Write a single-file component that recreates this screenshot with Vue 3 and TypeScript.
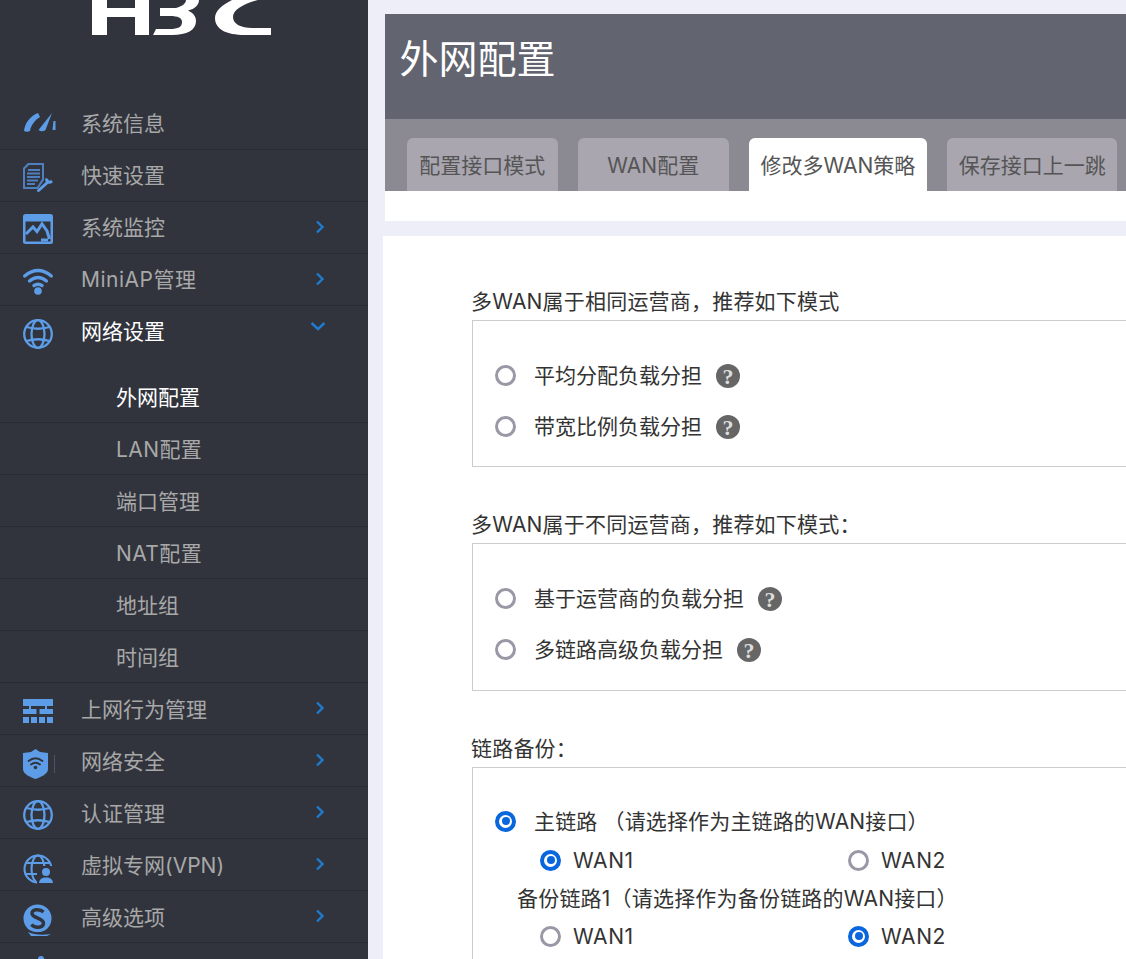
<script setup lang="ts">
interface MenuItem { label: string; icon: string; arrow?: 'right' | 'down'; active?: boolean; wide?: boolean }
const topItems: MenuItem[] = [
  { label: '系统信息', icon: 'gauge' },
  { label: '快速设置', icon: 'doc' },
  { label: '系统监控', icon: 'monitor', arrow: 'right' },
  { label: 'MiniAP管理', icon: 'wifi', arrow: 'right', wide: true },
  { label: '网络设置', icon: 'globe', arrow: 'down', active: true },
]
const subItems = [
  { label: '外网配置', active: true },
  { label: 'LAN配置', wide: true },
  { label: '端口管理' },
  { label: 'NAT配置', wide: true },
  { label: '地址组' },
  { label: '时间组' },
]
const bottomItems: MenuItem[] = [
  { label: '上网行为管理', icon: 'org', arrow: 'right' },
  { label: '网络安全', icon: 'shield', arrow: 'right' },
  { label: '认证管理', icon: 'globe', arrow: 'right' },
  { label: '虚拟专网(VPN)', icon: 'vpn', arrow: 'right' },
  { label: '高级选项', icon: 'quick', arrow: 'right' },
  { label: '', icon: 'tools' },
]
const tabs = [
  { label: '配置接口模式' },
  { label: 'WAN配置' },
  { label: '修改多WAN策略', active: true },
  { label: '保存接口上一跳' },
]
const groups = [
  { title: '多WAN属于相同运营商，推荐如下模式', options: ['平均分配负载分担', '带宽比例负载分担'] },
  { title: '多WAN属于不同运营商，推荐如下模式：', options: ['基于运营商的负载分担', '多链路高级负载分担'] },
]
</script>

<template>
  <div class="page">
    <aside class="sidebar">
      <div class="logo">
        <svg class="logo-svg" width="368" height="40" viewBox="0 0 368 40">
          <path fill="#fff" d="M92 0H107V8H135V0H149V35H135V17H107V35H92Z" />
          <path fill="#fff" d="M160 8H176C183 6 186 3 186 0H199C199 5 195 9 188 10.500C193 13 196 16 196 21C196 30 187 35 172 35H153L156 29H170C178 29 182 27 182 22C182 18 178 16 170 16H160Z" />
          <path fill="#fff" d="M232 0C222 5 215 11 215 18C215 29 226 35 245 35H271V28H252C241 28 233 24 233 17C233 10 243 4 258 0Z" />
        </svg>
      </div>
      <ul class="menu">
        <template v-for="(list, listIndex) in [topItems, bottomItems]" :key="listIndex">
          <li v-for="item in list" :key="item.icon + item.label" class="menu-row" :class="{ on: item.active, low: listIndex === 1, wide: item.wide }">
            <svg class="ic" width="30" height="30" viewBox="0 0 30 30">
              <g v-if="item.icon === 'gauge'" fill="#5d9de8">
                <path d="M1 21C2 13 7 6 15 3L17 7C12 10 8 15 7 21Q4 22.500 1 21Z" />
                <path d="M15.500 20L29 3L22.500 20Q19 22.500 15.500 20Z" />
                <path d="M30.500 11L32.500 11V20L29.500 20Z" />
              </g>
              <g v-else-if="item.icon === 'doc'">
                <path fill="#4f7fbe" d="M5 1H21V18L15 27H0V6Z" />
                <path fill="#31343d" d="M6 3H19V17L14 25H2V7Z" />
                <path fill="#4f7fbe" d="M5 7H17V9H5ZM4 10.500H17V12.500H4ZM4 14H17V16H4ZM4 17.500H15V19.500H4ZM4 21H12V23H4Z" />
                <path fill="none" stroke="#5d9de8" stroke-width="3" stroke-linecap="round" d="M15.500 28.500L25 20" />
                <path fill="none" stroke="#5d9de8" stroke-width="3" d="M24 16.500C23 19 25.500 22 29 19" />
              </g>
              <g v-else-if="item.icon === 'monitor'">
                <rect width="30" height="30" rx="2.500" fill="#5d9de8" />
                <rect x="2.500" y="7.500" width="25" height="20" fill="#31343d" />
                <path fill="none" stroke="#5d9de8" stroke-width="3" d="M3 20L10 13L14 17.500L19 10L24 17L26.500 25" />
                <rect x="18" y="24.500" width="7" height="3" fill="#5d9de8" />
              </g>
              <g v-else-if="item.icon === 'wifi'">
                <g fill="none" stroke="#5d9de8" stroke-width="3.400" stroke-linecap="round">
                  <path d="M1.700 10Q15 -1 28.300 10" />
                  <path d="M6.500 15Q15 8 23.500 15" />
                  <path d="M11 19.500Q15 17 19 19.500" />
                </g>
                <circle cx="15" cy="25" r="3.800" fill="#5d9de8" />
              </g>
              <g v-else-if="item.icon === 'globe'" fill="none" stroke="#5d9de8" stroke-width="2.300">
                <circle cx="15" cy="16" r="13.800" />
                <ellipse cx="15" cy="16" rx="6.500" ry="13.800" />
                <path d="M3.500 9Q15 12.500 26.500 9M3.500 23Q15 19.500 26.500 23" />
              </g>
              <g v-else-if="item.icon === 'org'" fill="#5d9de8">
                <path d="M0 4H30V11H0Z" />
                <path d="M6 11H8V14H6ZM22 11H24V14H22Z" />
                <path d="M0 14H13.500V19H0ZM16.500 14H30V19H16.500Z" />
                <path d="M0 22H6V28H0ZM8 22H14V28H8ZM16 22H22V28H16ZM24 22H30V28H24Z" />
              </g>
              <g v-else-if="item.icon === 'shield'">
                <path fill="#5d9de8" d="M12.500 2L17 5L25 6V22C25 27 18 30 12.500 32C7 30 0 27 0 22V6L8 5Z" />
                <g fill="none" stroke="#31343d" stroke-width="1.800" stroke-linecap="round">
                  <path d="M5.500 14Q12.500 8.500 19.500 14" />
                  <path d="M8 17.500Q12.500 14 17 17.500" />
                </g>
                <circle cx="12.500" cy="20.500" r="1.800" fill="#31343d" />
                <path stroke="#48546b" stroke-width="1" d="M31.500 8V26" />
              </g>
              <g v-else-if="item.icon === 'vpn'">
                <g fill="none" stroke="#5d9de8" stroke-width="2.100">
                  <circle cx="15" cy="18" r="13.500" />
                  <ellipse cx="15" cy="18" rx="6.500" ry="13.500" />
                  <path d="M3 12H27M3 23H27" />
                </g>
                <path fill="#31343d" d="M14 15H31V33H14Z" />
                <circle cx="23" cy="21" r="4" fill="#5d9de8" />
                <path fill="#5d9de8" d="M16 32C16.500 28 19 26.500 23 26.500C27 26.500 29.500 28 30 32Z" />
              </g>
              <g v-else-if="item.icon === 'quick'">
                <circle cx="14.500" cy="15.500" r="14" fill="#5d9de8" />
                <path fill="none" stroke="#31343d" stroke-width="3.400" d="M20.500 9C17 5.500 8.500 6 9 10.500C9.500 15.500 21 15 20.500 20.500C20 25 11.500 25.500 8.500 21.500" />
                <path fill="none" stroke="#31343d" stroke-width="1.500" d="M6 28Q14 32 24 28" />
                <path fill="#5d9de8" d="M5 29Q14 33 28 31L24 33H8Z" />
              </g>
              <g v-else fill="#5d9de8">
                <circle cx="18" cy="4" r="3" />
              </g>
            </svg>
            <span class="menu-label">{{ item.label }}</span>
            <svg v-if="item.arrow === 'right'" class="arrow" width="10" height="14" viewBox="0 0 10 14">
              <path fill="none" stroke="#1f7bcd" stroke-width="2.400" d="M2 1.500L7.500 7L2 12.500" />
            </svg>
            <svg v-else-if="item.arrow === 'down'" class="arrow down" width="16" height="10" viewBox="0 0 16 10">
              <path fill="none" stroke="#1f7bcd" stroke-width="2.400" d="M1.500 2L8 8L14.500 2" />
            </svg>
          </li>
          <li v-if="listIndex === 0" class="submenu">
            <div v-for="sub in subItems" :key="sub.label" class="sub-row" :class="{ on: sub.active, wide: sub.wide }">{{ sub.label }}</div>
          </li>
        </template>
      </ul>
    </aside>

    <main class="main">
      <section class="head">
        <h1 class="title">外网配置</h1>
        <nav class="tabs">
          <div v-for="tab in tabs" :key="tab.label" class="tab" :class="{ on: tab.active }">{{ tab.label }}</div>
        </nav>
        <div class="head-foot"></div>
      </section>

      <section class="panel">
        <div v-for="group in groups" :key="group.title" class="group">
          <div class="group-title">{{ group.title }}</div>
          <div class="box">
            <div v-for="option in group.options" :key="option" class="row">
              <span class="radio"></span>
              <span class="row-text">{{ option }}</span>
              <span class="help">?</span>
            </div>
          </div>
        </div>

        <div class="group">
          <div class="group-title">链路备份：</div>
          <div class="box last">
            <div class="row main-row">
              <span class="radio checked"></span>
              <span class="row-text spaced">主链路 （请选择作为主链路的WAN接口）</span>
            </div>
            <div class="sub-radios">
              <label class="wan"><span class="radio checked"></span>WAN1</label>
              <label class="wan"><span class="radio"></span>WAN2</label>
            </div>
            <div class="backup">备份链路1（请选择作为备份链路的WAN接口）</div>
            <div class="sub-radios">
              <label class="wan"><span class="radio"></span>WAN1</label>
              <label class="wan"><span class="radio checked"></span>WAN2</label>
            </div>
          </div>
        </div>
      </section>
    </main>
  </div>
</template>

<style>
html, body { margin: 0; height: 100%; overflow: hidden; background: #eeeef8; }
</style>

<style scoped>
.page {
  display: flex;
  width: 1126px;
  height: 959px;
  overflow: hidden;
  font-family: Inter, "Noto Sans CJK SC", sans-serif;
  font-size: 21px;
  color: #333;
  background: #eeeef8;
}
.sidebar {
  flex: 0 0 368px;
  height: 959px;
  overflow: hidden;
  background: #31343d;
}
.logo { height: 98px; }
.logo-svg { display: block; }
.menu { list-style: none; margin: 0; padding: 0; }
.menu-row {
  display: flex;
  height: 51px;
  border-bottom: 1px solid #292c33;
  color: #a8a8a8;
}
.menu-row.on { color: #fff; border-bottom-color: #31343d; }
.ic { flex: none; margin: 12px 0 0 23px; overflow: visible; }
.menu-label { margin-left: 28px; line-height: 51px; white-space: nowrap; }
.menu-row.low .menu-label { line-height: 53px; }
.menu-row.wide .menu-label { letter-spacing: 0.500px; }
.arrow { position: absolute; left: 315px; margin-top: 18px; }
.arrow.down { left: 310px; margin-top: 15px; }
.submenu { border-bottom: 1px solid #282b32; margin: 13px 0 0; }
.sub-row {
  height: 51px;
  line-height: 53px;
  padding-left: 116px;
  color: #a8a8a8;
  border-bottom: 1px solid #292c33;
}
.sub-row.wide { letter-spacing: 0.400px; }
.sub-row:last-child { border-bottom: 0; }
.sub-row.on { color: #fff; }
.main { flex: 1; min-width: 0; padding-top: 14px; }
.head { margin-left: 17px; background: #fff; height: 207px; }
.title {
  margin: 0;
  height: 105px;
  background: #62646f;
  color: #fff;
  font-size: 39px;
  font-weight: 400;
  line-height: 90px;
  padding-left: 14.500px;
}
.tabs {
  display: flex;
  gap: 20.500px;
  height: 53px;
  padding: 19px 0 0 22px;
  background: #8b8992;
  overflow: hidden;
}
.tab {
  flex: none;
  min-width: 150.500px;
  padding: 0 11.500px;
  box-sizing: border-box;
  height: 53px;
  line-height: 55px;
  text-align: center;
  color: #555;
  background: #a9a6b0;
  border-radius: 6px 6px 0 0;
  white-space: nowrap;
}
.tab.on { background: #fff; color: #555; }
.head-foot { height: 30px; }
.panel {
  margin: 15px 0 0 15px;
  height: 760px;
  padding: 51px 0 0 88px;
  background: #fff;
  overflow: hidden;
}
.group { margin-bottom: 43px; }
.group-title { line-height: 30px; height: 30px; margin-bottom: 3px; white-space: nowrap; letter-spacing: 0.200px; }
.box {
  box-sizing: border-box;
  width: 900px;
  margin-left: 1px;
  padding: 29px 0 14px;
  border: 1px solid #ccc;
}
.group:nth-child(2) .box { padding-bottom: 15px; }
.row { display: flex; align-items: center; height: 51px; padding-left: 22px; }
.row-text { margin-left: 18px; position: relative; top: -1.500px; }
.row-text.spaced { letter-spacing: 0.150px; }
.radio {
  flex: none;
  box-sizing: border-box;
  width: 21px;
  height: 21px;
  border: 3px solid #9a98a6;
  border-radius: 50%;
  background: #fff;
}
.radio.checked { border: 4px solid #0a66dc; background: #fff; position: relative; }
.radio.checked::after {
  content: "";
  position: absolute;
  inset: 0;
  margin: auto;
  width: 8px;
  height: 8px;
  border-radius: 50%;
  background: #0a66dc;
}
.help {
  flex: none;
  width: 24px;
  height: 24px;
  margin-left: 14px;
  border-radius: 50%;
  background: #666;
  color: #ddd;
  font: bold 22px/25px "Liberation Serif", serif;
  text-align: center;
}
.main-row { height: 42px; margin-top: 3px; }
.sub-radios { display: grid; grid-template-columns: 308px 308px; height: 36px; padding-left: 67px; }
.wan { display: flex; align-items: center; gap: 12px; letter-spacing: 0.600px; }
.backup { height: 40px; line-height: 42px; padding-left: 44px; white-space: nowrap; letter-spacing: 0.200px; }
</style>
